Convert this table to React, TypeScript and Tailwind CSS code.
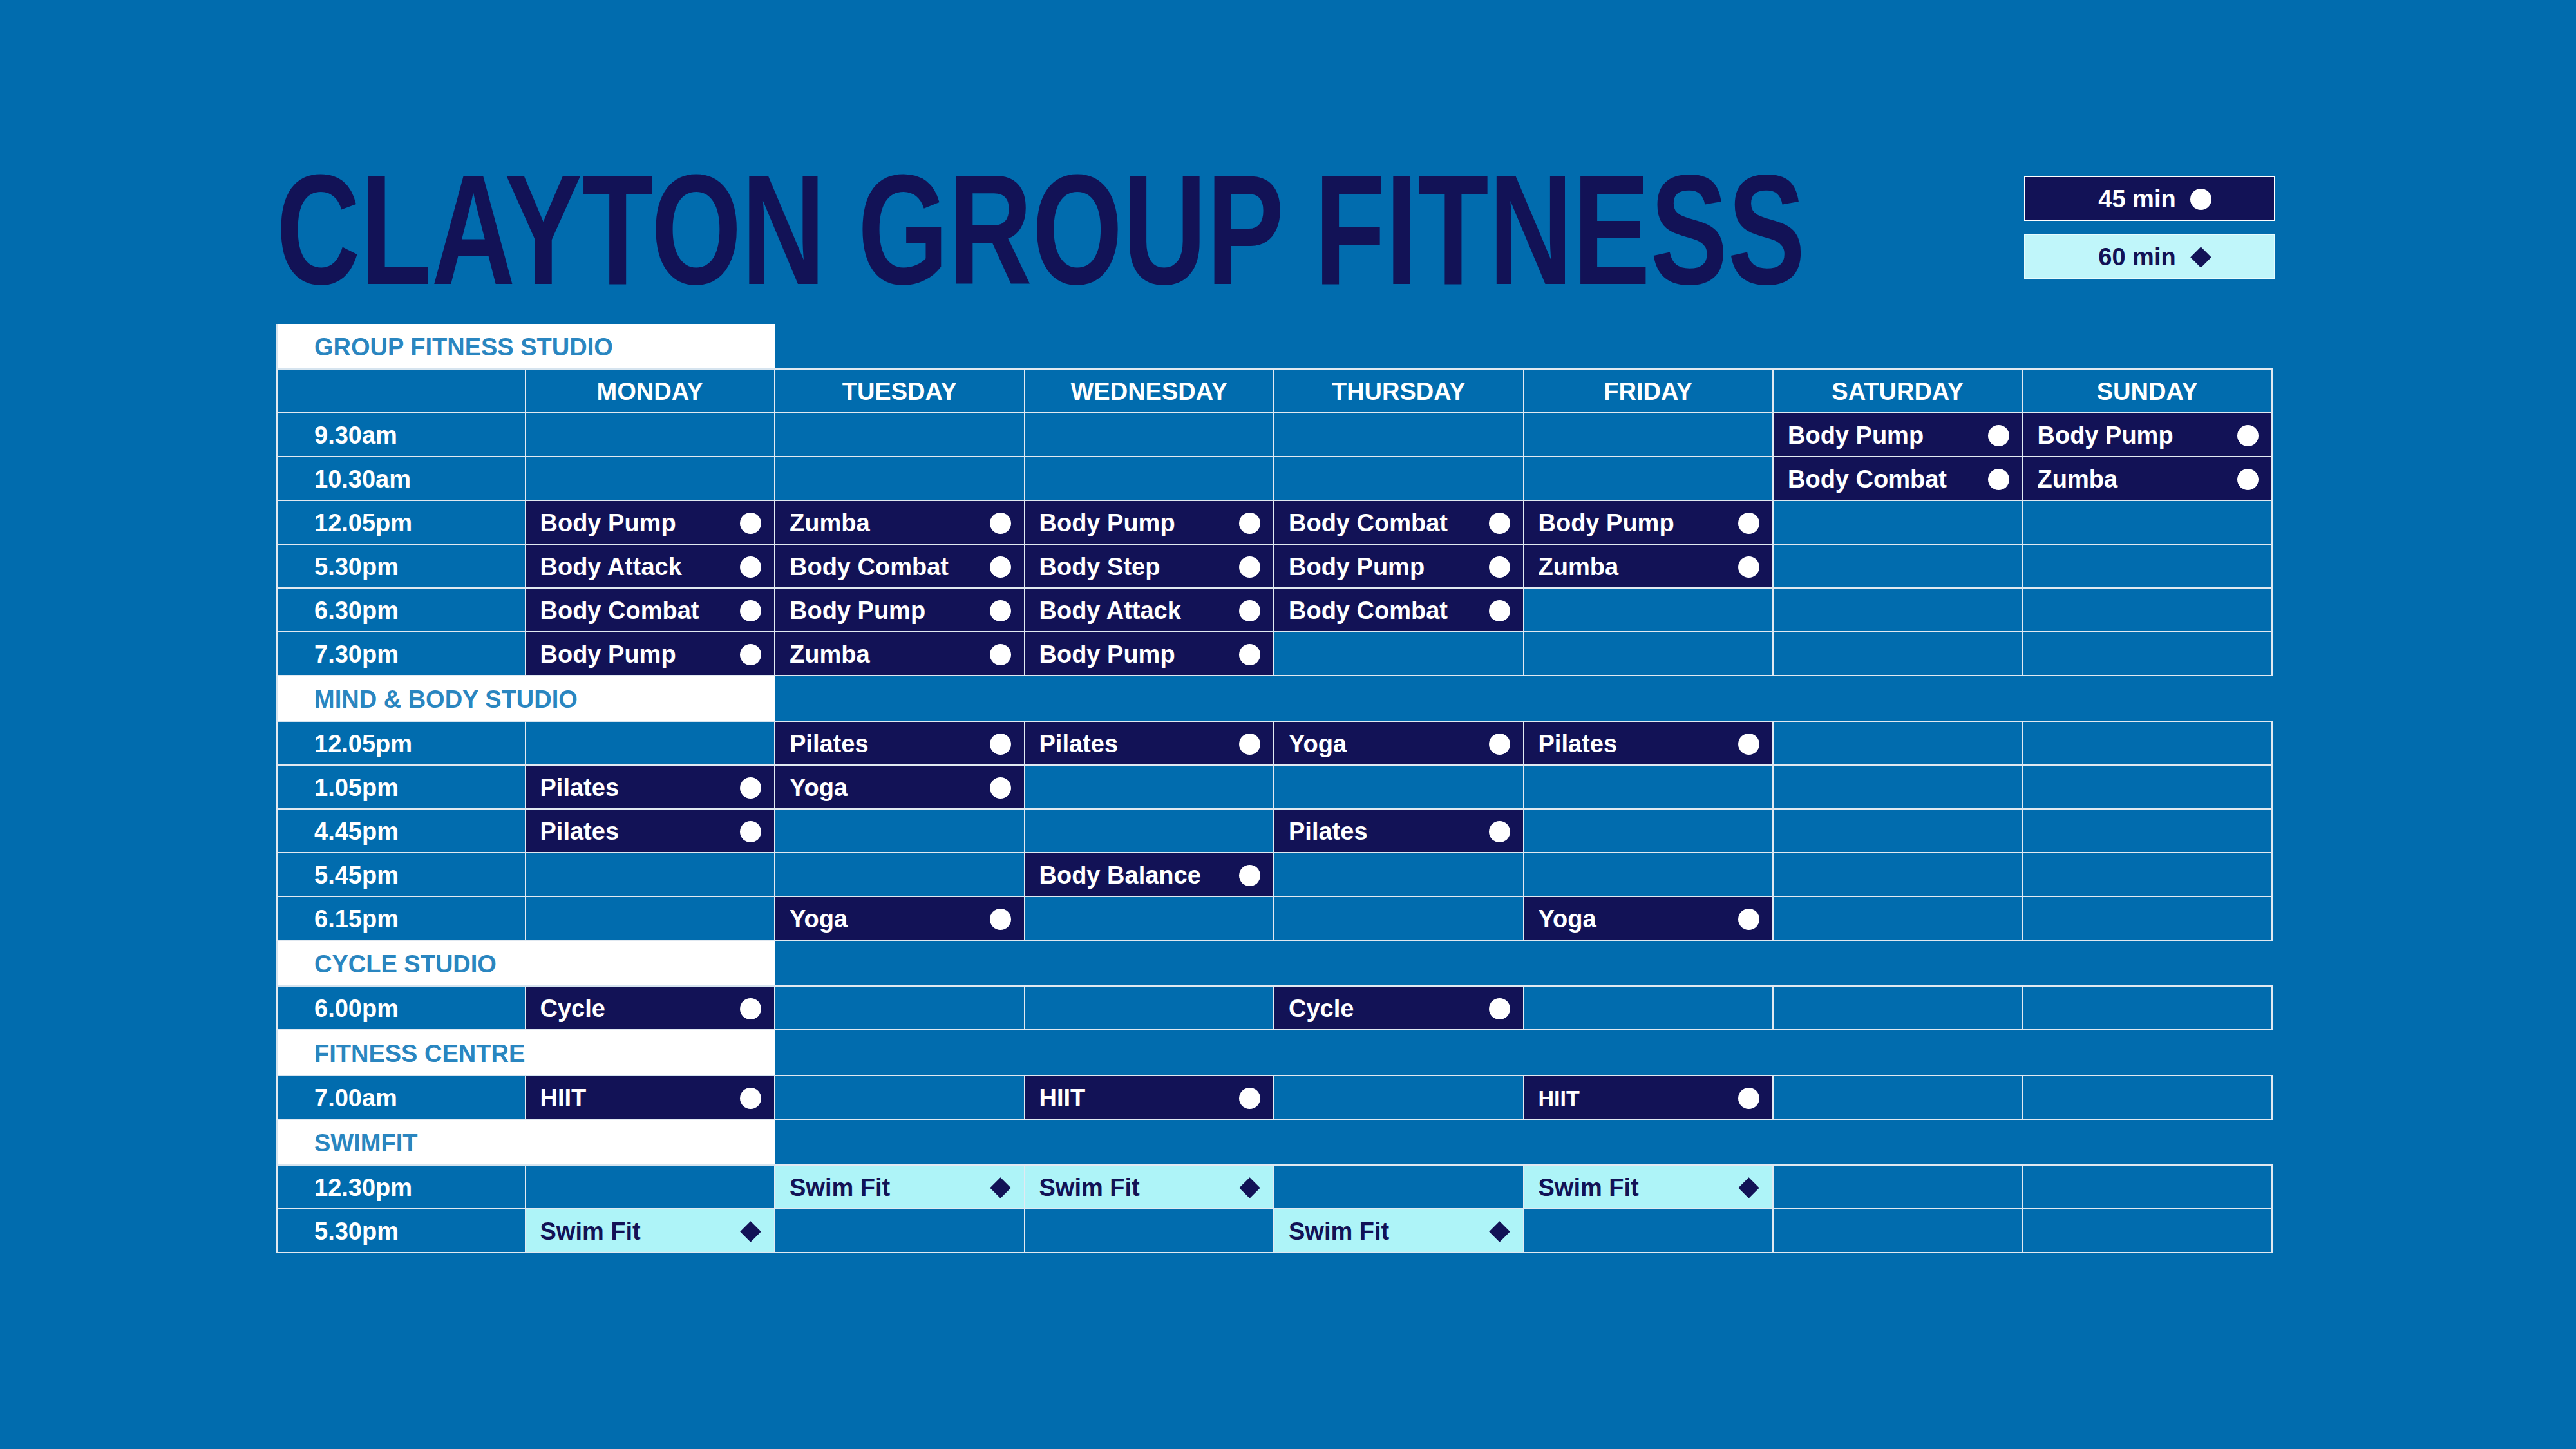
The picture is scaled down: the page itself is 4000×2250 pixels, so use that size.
import React from "react";

const DAYS = ["MONDAY", "TUESDAY", "WEDNESDAY", "THURSDAY", "FRIDAY", "SATURDAY", "SUNDAY"];

type Slot = { name: string; small?: boolean } | null;
type Row = { time: string; slots: Slot[] };
type Section = { title: string; swim?: boolean; rows: Row[] };

const c = (name: string, small = false): Slot => ({ name, small });

const SECTIONS: Section[] = [
  {
    title: "GROUP FITNESS STUDIO",
    rows: [
      { time: "9.30am", slots: [null, null, null, null, null, c("Body Pump"), c("Body Pump")] },
      { time: "10.30am", slots: [null, null, null, null, null, c("Body Combat"), c("Zumba")] },
      { time: "12.05pm", slots: [c("Body Pump"), c("Zumba"), c("Body Pump"), c("Body Combat"), c("Body Pump"), null, null] },
      { time: "5.30pm", slots: [c("Body Attack"), c("Body Combat"), c("Body Step"), c("Body Pump"), c("Zumba"), null, null] },
      { time: "6.30pm", slots: [c("Body Combat"), c("Body Pump"), c("Body Attack"), c("Body Combat"), null, null, null] },
      { time: "7.30pm", slots: [c("Body Pump"), c("Zumba"), c("Body Pump"), null, null, null, null] },
    ],
  },
  {
    title: "MIND & BODY STUDIO",
    rows: [
      { time: "12.05pm", slots: [null, c("Pilates"), c("Pilates"), c("Yoga"), c("Pilates"), null, null] },
      { time: "1.05pm", slots: [c("Pilates"), c("Yoga"), null, null, null, null, null] },
      { time: "4.45pm", slots: [c("Pilates"), null, null, c("Pilates"), null, null, null] },
      { time: "5.45pm", slots: [null, null, c("Body Balance"), null, null, null, null] },
      { time: "6.15pm", slots: [null, c("Yoga"), null, null, c("Yoga"), null, null] },
    ],
  },
  {
    title: "CYCLE STUDIO",
    rows: [{ time: "6.00pm", slots: [c("Cycle"), null, null, c("Cycle"), null, null, null] }],
  },
  {
    title: "FITNESS CENTRE",
    rows: [{ time: "7.00am", slots: [c("HIIT"), null, c("HIIT"), null, c("HIIT", true), null, null] }],
  },
  {
    title: "SWIMFIT",
    swim: true,
    rows: [
      { time: "12.30pm", slots: [null, c("Swim Fit"), c("Swim Fit"), null, c("Swim Fit"), null, null] },
      { time: "5.30pm", slots: [c("Swim Fit"), null, null, c("Swim Fit"), null, null, null] },
    ],
  },
];

function Dot() {
  return <span className="w-[33px] h-[33px] rounded-full bg-white shrink-0" />;
}

function Diamond() {
  return (
    <span className="w-[33px] h-[33px] flex items-center justify-center shrink-0">
      <span className="w-[23px] h-[23px] rotate-45 bg-[#121256]" />
    </span>
  );
}

function ClassCell({ slot, swim }: { slot: Slot; swim?: boolean }) {
  if (!slot) return <div className="border-r-2 border-b-2 border-[#e1e9f1]" />;
  return (
    <div
      className={`flex items-center justify-between pl-[22px] pr-[20px] pt-[2px] border-r-2 border-b-2 border-[#e1e9f1] ${
        swim ? "bg-[#aef4f8] text-[#121256]" : "bg-[#121256] text-white"
      }`}
    >
      <span className={`font-bold leading-none ${slot.small ? "text-[34px]" : "text-[38px]"}`}>{slot.name}</span>
      {swim ? <Diamond /> : <Dot />}
    </div>
  );
}

function SectionHeader({ title }: { title: string }) {
  return (
    <div className="grid grid-cols-[775px_2325px] h-[71px]">
      <div className="bg-white border-l-2 border-b-2 border-[#d6e4ef] flex items-center pl-[57px] pt-[2px]">
        <span className="text-[38px] font-bold leading-none text-[#2a86c0]">{title}</span>
      </div>
      <div className="border-b-2 border-[#e1e9f1]" />
    </div>
  );
}

export default function App() {
  return (
    <div
      className="w-[4000px] h-[2250px] bg-[#016cae] pl-[429px] pt-[235px] overflow-hidden"
      style={{ fontFamily: '"Liberation Sans", Arial, sans-serif' }}
    >
      <div className="w-[3100px] flex items-start h-[268px]">
        <div className="w-[2400px] shrink-0 whitespace-nowrap">
          <h1 className="inline-block origin-left scale-x-[0.743] text-[243px] leading-none font-bold text-[#121256]">
            CLAYTON GROUP FITNESS
          </h1>
        </div>
        <div className="ml-auto mr-[-4px] mt-[38px] flex flex-col gap-[20px]">
          <div className="w-[390px] h-[70px] border-2 border-white bg-[#121256] text-white flex items-center justify-center gap-[22px] pl-[16px] pt-[2px]">
            <span className="text-[38px] font-bold leading-none">45 min</span>
            <Dot />
          </div>
          <div className="w-[390px] h-[70px] border-2 border-[#e6fbfd] bg-[#c0f6fa] text-[#121256] flex items-center justify-center gap-[22px] pl-[16px] pt-[2px]">
            <span className="text-[38px] font-bold leading-none">60 min</span>
            <Diamond />
          </div>
        </div>
      </div>

      <div className="w-[3100px] flex flex-col">
        {SECTIONS.map((section, si) => (
          <React.Fragment key={section.title}>
            <SectionHeader title={section.title} />
            {si === 0 && (
              <div className="grid grid-cols-[repeat(8,387.5px)] h-[68px] text-white">
                <div className="border-l-2 border-r-2 border-b-2 border-[#e1e9f1]" />
                {DAYS.map((d) => (
                  <div
                    key={d}
                    className="flex items-center justify-center pt-[2px] border-r-2 border-b-2 border-[#e1e9f1]"
                  >
                    <span className="text-[38px] font-bold leading-none">{d}</span>
                  </div>
                ))}
              </div>
            )}
            {section.rows.map((row, ri) => (
              <div key={ri} className="grid grid-cols-[repeat(8,387.5px)] h-[68px]">
                <div className="flex items-center pl-[57px] pt-[2px] border-l-2 border-r-2 border-b-2 border-[#e1e9f1] text-white">
                  <span className="text-[38px] font-bold leading-none">{row.time}</span>
                </div>
                {row.slots.map((slot, i) => (
                  <ClassCell key={i} slot={slot} swim={section.swim} />
                ))}
              </div>
            ))}
          </React.Fragment>
        ))}
      </div>
    </div>
  );
}
